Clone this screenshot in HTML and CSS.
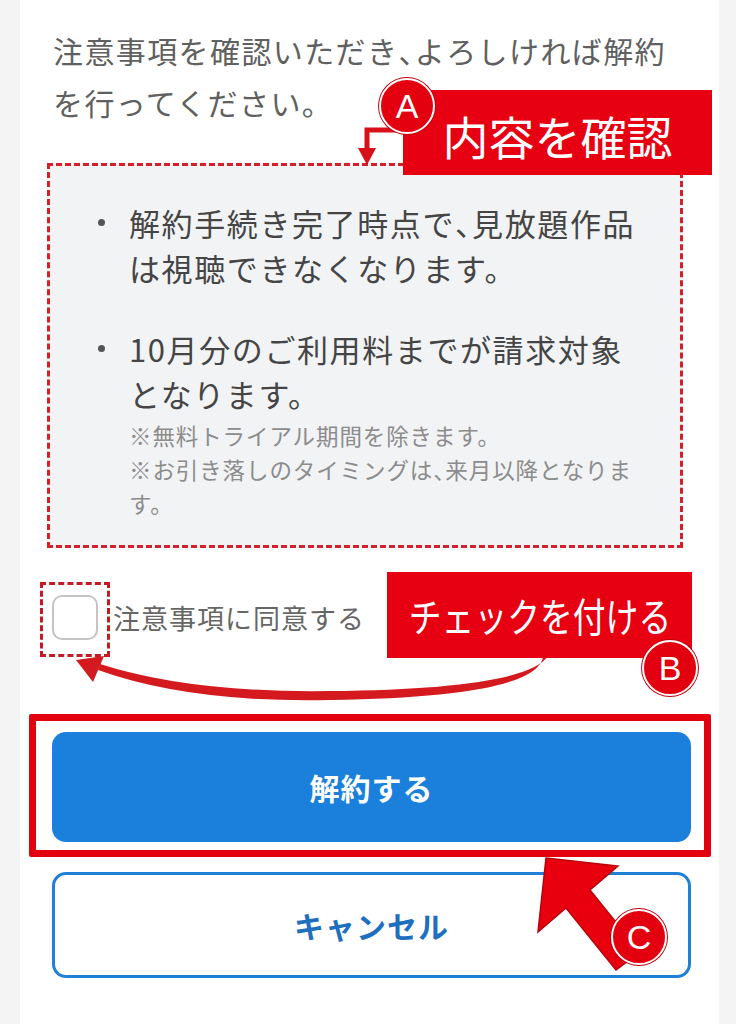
FILE: index.html
```html
<!DOCTYPE html>
<html lang="ja">
<head>
<meta charset="utf-8">
<title>解約</title>
<link rel="stylesheet" href="styles.css">
</head>
<body>
<div class="screen">
  <main class="page">
    <p class="intro">注意事項を確認いただき<span class="punc">、</span>よろしければ解約を行ってください。</p>
    <section class="notice">
      <ul class="items">
        <li>解約手続き完了時点で<span class="punc">、</span>見放題作品は視聴できなくなります。</li>
        <li>10月分のご利用料までが請求対象となります。
          <div class="notes">
            <p>※無料トライアル期間を除きます。</p>
            <p>※お引き落しのタイミングは<span class="punc">、</span>来月以降となります。</p>
          </div>
        </li>
      </ul>
    </section>
    <label class="agree">
      <span class="checkbox"></span>
      <span class="agree-text">注意事項に同意する</span>
    </label>
    <div class="actions">
      <button class="btn btn-primary" type="button">解約する</button>
      <button class="btn btn-cancel" type="button">キャンセル</button>
    </div>
  </main>

  <svg class="arrows" width="736" height="1024" viewBox="0 0 736 1024" aria-hidden="true">
    <path d="M398 130 H367 V150" fill="none" stroke="#d8101a" stroke-width="5"/>
    <polygon points="358,148 376,148 367,165" fill="#d8101a"/>
    <path d="M548 656 Q526 689 330 691 Q190 693 100 664 L98 670 Q190 703 330 700 Q536 697 543 657 Z" fill="#d41a1f"/>
    <polygon points="76,660 104,656 93,682" fill="#d41a1f"/>
    <polygon points="546,858 618,866 590,890 640,952 616,970 566,908 538,932" fill="#e8000e" stroke="#b8000a" stroke-width="1.5"/>
  </svg>

  <div class="tag tag-a">内容を確認</div>
  <div class="tag tag-b"><span>チェックを付ける</span></div>
  <div class="hl-check"></div>
  <div class="hl-button"></div>
  <div class="badge badge-a">A</div>
  <div class="badge badge-b">B</div>
  <div class="badge badge-c">C</div>
</div>
</body>
</html>
```

FILE: styles.css
```css
* { box-sizing: border-box; }
html, body { margin: 0; padding: 0; }
body {
  background: #f4f4f4;
  font-family: "Noto Sans CJK JP", "Noto Sans", sans-serif;
}
.screen {
  position: relative;
  width: 736px;
  height: 1024px;
  overflow: hidden;
}
.page {
  margin: 0 17px 0 20px;
  height: 1024px;
  background: #fff;
  padding-top: 24px;
}
.punc { font-feature-settings: "halt"; }
.intro {
  margin: 0;
  padding: 0 38px 0 33px;
  font-size: 30px;
  line-height: 52px;
  letter-spacing: 1.4px;
  color: #606060;
}
.notice {
  margin: 35px 36px 0 27px;
  background: #f2f3f5;
  border: 3px dashed #d3212b;
  padding: 34px 34px 25px 79px;
}
.items {
  list-style: none;
  margin: 0;
  padding: 0;
}
.items li {
  position: relative;
  font-size: 31px;
  line-height: 45px;
  letter-spacing: 1.6px;
  color: #454545;
}
.items li + li { margin-top: 36px; }
.items li::before {
  content: "";
  position: absolute;
  left: -31px;
  top: 19px;
  width: 7px;
  height: 7px;
  border-radius: 50%;
  background: #555;
}
.notes {
  margin-top: 2px;
}
.notes p {
  margin: 0;
  font-size: 22.5px;
  line-height: 34px;
  letter-spacing: 0.9px;
  color: #8c8c8c;
}
.agree {
  display: flex;
  align-items: center;
  gap: 15px;
  margin: 47px 0 0 32px;
}
.checkbox {
  width: 46px;
  height: 45px;
  border: 2px solid #c4c4c4;
  border-radius: 10px;
  background: #fff;
}
.agree-text {
  font-size: 27px;
  letter-spacing: 1px;
  color: #666;
}
.actions {
  display: flex;
  flex-direction: column;
  gap: 30px;
  margin: 92px 28px 0 32px;
}
.btn {
  display: block;
  width: 100%;
  font-family: inherit;
  font-size: 30px;
  font-weight: 700;
  letter-spacing: 1px;
  border-radius: 14px;
}
.btn-primary {
  height: 110px;
  background: #1b7fdc;
  color: #fff;
  border: none;
}
.btn-cancel {
  height: 106px;
  background: #fff;
  color: #1f6fbf;
  border: 3px solid #2080d8;
}

/* annotations */
.arrows {
  position: absolute;
  left: 0;
  top: 0;
}
.tag {
  position: absolute;
  background: #e60012;
  color: #fff;
  display: flex;
  align-items: center;
  justify-content: center;
}
.tag-a {
  left: 403px;
  top: 90px;
  width: 309px;
  height: 85px;
  font-size: 46px;
  padding-top: 4px;
}
.tag-b {
  left: 387px;
  top: 572px;
  width: 305px;
  height: 86px;
  font-size: 40px;
}
.tag-b span {
  display: inline-block;
  transform: scaleX(0.82);
  white-space: nowrap;
}
.hl-check {
  position: absolute;
  left: 40px;
  top: 582px;
  width: 70px;
  height: 75px;
  border: 3px dashed #c41a24;
}
.hl-button {
  position: absolute;
  left: 29px;
  top: 714px;
  width: 682px;
  height: 143px;
  border: 7px solid #e3000f;
  border-radius: 2px;
}
.badge {
  position: absolute;
  width: 56px;
  height: 56px;
  border-radius: 50%;
  background: #e3000f;
  border: 2px solid #fff;
  box-shadow: 0 0 0 1px #c0000a;
  color: #fff;
  font-family: "Liberation Sans", sans-serif;
  font-size: 34px;
  line-height: 52px;
  text-align: center;
}
.badge-a { left: 379px; top: 78px; }
.badge-b { left: 642px; top: 640px; }
.badge-c { left: 611px; top: 909px; }
```
